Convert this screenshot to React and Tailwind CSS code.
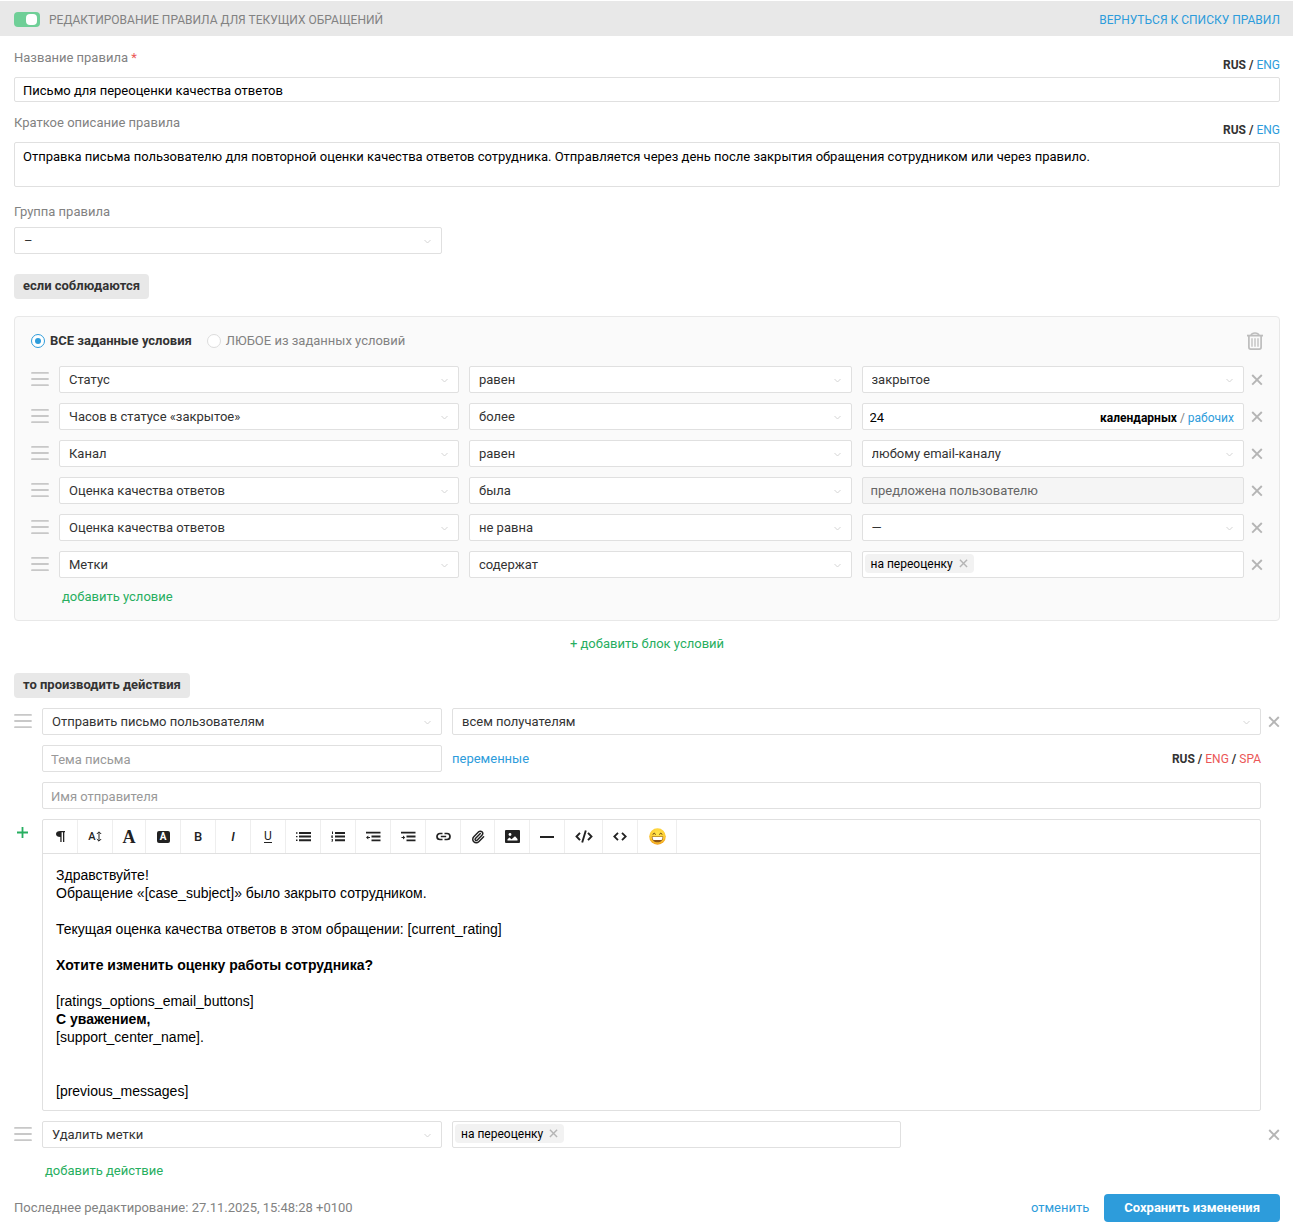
import React, { useState } from 'react';
import clsx from 'clsx';
import { Paperclip } from 'lucide-react';

const CONDITIONS = [
  { field: 'Статус', operator: 'равен', type: 'select', value: 'закрытое' },
  { field: 'Часов в статусе «закрытое»', operator: 'более', type: 'hours', value: '24' },
  { field: 'Канал', operator: 'равен', type: 'select', value: 'любому email-каналу' },
  { field: 'Оценка качества ответов', operator: 'была', type: 'readonly', value: 'предложена пользователю' },
  { field: 'Оценка качества ответов', operator: 'не равна', type: 'select', value: '—' },
  { field: 'Метки', operator: 'содержат', type: 'tags', value: 'на переоценку' },
];

const App = () => {
  const [enabled, setEnabled] = useState(true);
  const [match, setMatch] = useState('all');

  return (
    <main className="bg-white pt-px font-[Roboto,sans-serif] text-[13px] leading-4 text-[#333]">
      {/* Header */}
      <header className="flex h-[35px] items-center justify-between bg-[#e8e8e8] pt-0.5 pr-[13px] pl-3.5 text-xs">
        <div className="flex items-center gap-[9px]">
          <label className="relative flex cursor-pointer">
            <input
              type="checkbox"
              aria-label="Правило включено"
              checked={enabled}
              onChange={(e) => setEnabled(e.target.checked)}
              className="peer h-[15px] w-[26px] appearance-none rounded-sm bg-gray-300 checked:bg-[#6fcf97]"
            />
            <span className="pointer-events-none absolute top-0.5 left-0.5 h-[11px] w-[11px] rounded-sm bg-white peer-checked:left-3" />
          </label>
          <h1 className="text-[#828282]">РЕДАКТИРОВАНИЕ ПРАВИЛА ДЛЯ ТЕКУЩИХ ОБРАЩЕНИЙ</h1>
        </div>
        <a href="#rules" className="text-[#2d9cdb]">ВЕРНУТЬСЯ К СПИСКУ ПРАВИЛ</a>
      </header>

      <form className="pr-[13px] pl-3.5" onSubmit={(e) => e.preventDefault()}>
        {/* Name and description */}
        <div className="flex h-[41px] items-end justify-between pb-1">
          <label htmlFor="name" className="mb-[7px] text-[#828282]">
            Название правила <span className="text-[#eb5757]">*</span>
          </label>
          <Languages items={['ENG']} />
        </div>
        <input
          id="name"
          defaultValue="Письмо для переоценки качества ответов"
          className="block h-[25px] w-full rounded-xs border border-[#e0e0e0] px-2 pt-0.5 text-black outline-none"
        />
        <div className="flex h-10 items-end justify-between pb-1">
          <label htmlFor="description" className="mb-[7px] text-[#828282]">Краткое описание правила</label>
          <Languages items={['ENG']} />
        </div>
        <textarea
          id="description"
          defaultValue="Отправка письма пользователю для повторной оценки качества ответов сотрудника. Отправляется через день после закрытия обращения сотрудником или через правило."
          className="block h-[45px] w-full resize-none rounded-xs border border-[#e0e0e0] px-2 py-1.5 text-black outline-none"
        />

        {/* Group */}
        <label htmlFor="group" className="mt-[17px] mb-[7px] block text-[#828282]">Группа правила</label>
        <SelectBox id="group" value="–" className="w-[428px]" />

        <SectionBadge className="mt-5">если соблюдаются</SectionBadge>

        {/* Conditions */}
        <section className="mt-[17px] rounded-sm border border-[#e8e8e8] bg-[#fafafa] px-4 py-[15px]">
          <div className="mb-4 flex items-center">
            <RadioOption checked={match === 'all'} onChange={() => setMatch('all')} className="mr-[15px]">
              ВСЕ заданные условия
            </RadioOption>
            <RadioOption checked={match === 'any'} onChange={() => setMatch('any')}>
              ЛЮБОЕ из заданных условий
            </RadioOption>
            <button type="button" aria-label="Удалить блок" className="ml-auto text-[#bdbdbd]">
              <TrashIcon />
            </button>
          </div>
          <div className="flex flex-col gap-2.5">
            {CONDITIONS.map((item, i) => (
              <div key={i} className="flex items-center">
                <DragHandle />
                <div className="grid min-w-0 flex-1 grid-cols-[400px_1fr_1fr] gap-2.5">
                  <SelectBox label="Условие" value={item.field} />
                  <SelectBox label="Оператор" value={item.operator} />
                  <ConditionValue type={item.type} value={item.value} />
                </div>
                <RemoveButton />
              </div>
            ))}
          </div>
          <button type="button" className="mt-[11px] ml-[31px] block text-[#27ae60]">добавить условие</button>
        </section>

        <button type="button" className="mx-auto mt-[15px] block text-[#27ae60]">+ добавить блок условий</button>

        {/* Actions */}
        <SectionBadge className="mt-[21px]">то производить действия</SectionBadge>

        <div className="mt-2.5 flex items-center">
          <DragHandle />
          <div className="grid min-w-0 flex-1 grid-cols-[400px_1fr] gap-2.5">
            <SelectBox label="Действие" value="Отправить письмо пользователям" />
            <SelectBox label="Получатели" value="всем получателям" />
          </div>
          <RemoveButton />
        </div>
        <div className="mt-2.5 mr-[19px] ml-7 flex items-center">
          <input
            aria-label="Тема письма"
            placeholder="Тема письма"
            className="mr-2.5 h-[27px] w-[400px] rounded-xs border border-[#e0e0e0] px-2 pt-0.5 outline-none placeholder:text-[#999]"
          />
          <button type="button" className="mr-auto text-[#2d9cdb]">переменные</button>
          <Languages items={['ENG', 'SPA']} missing />
        </div>
        <div className="mt-2.5 mr-[19px] ml-7">
          <input
            aria-label="Имя отправителя"
            placeholder="Имя отправителя"
            className="block h-[27px] w-full rounded-xs border border-[#e0e0e0] px-2 pt-0.5 outline-none placeholder:text-[#999]"
          />
        </div>

        {/* Message editor */}
        <div className="mt-2.5 mr-[19px] flex items-start">
          <button type="button" aria-label="Добавить" className="mt-2 mr-3.5 ml-[3px] text-[#27ae60]">
            <svg width="11" height="11" viewBox="0 0 11 11" stroke="currentColor" strokeWidth="1.800" fill="none">
              <path d="M5.500 0v11M0 5.500h11" />
            </svg>
          </button>
          <div className="min-w-0 flex-1 rounded-xs border border-[#e0e0e0]">
            <Toolbar />
            <div
              contentEditable
              suppressContentEditableWarning
              role="textbox"
              aria-label="Текст письма"
              className="px-[13px] pt-3 pb-2.5 font-['Liberation_Sans',sans-serif] text-sm leading-[18px] text-black outline-none"
            >
              <p>Здравствуйте!</p>
              <p>Обращение «[case_subject]» было закрыто сотрудником.</p>
              <p><br /></p>
              <p>Текущая оценка качества ответов в этом обращении: [current_rating]</p>
              <p><br /></p>
              <p className="font-bold">Хотите изменить оценку работы сотрудника?</p>
              <p><br /></p>
              <p>[ratings_options_email_buttons]</p>
              <p className="font-bold">С уважением,</p>
              <p>[support_center_name].</p>
              <p><br /></p>
              <p><br /></p>
              <p>[previous_messages]</p>
            </div>
          </div>
        </div>

        <div className="mt-2.5 flex items-center">
          <DragHandle />
          <div className="grid min-w-0 flex-1 grid-cols-[400px_449px] gap-2.5">
            <SelectBox label="Действие" value="Удалить метки" />
            <TagBox value="на переоценку" />
          </div>
          <RemoveButton />
        </div>
        <button type="button" className="mt-[15px] ml-[31px] block text-[#27ae60]">добавить действие</button>

        {/* Footer */}
        <footer className="mt-[15px] flex items-center">
          <p className="mr-auto text-[#828282]">Последнее редактирование: 27.11.2025, 15:48:28 +0100</p>
          <button type="button" className="mr-[15px] text-[#2d9cdb]">отменить</button>
          <button type="submit" className="h-7 rounded-sm bg-[#2d9cdb] px-5 font-bold text-white">
            Сохранить изменения
          </button>
        </footer>
      </form>
    </main>
  );
};

const Languages = ({ items, missing }) => (
  <div className="text-xs leading-4 font-bold">
    RUS
    {items.map((lang) => (
      <React.Fragment key={lang}>
        {' / '}
        <button type="button" className={clsx('font-normal', missing ? 'text-[#eb5757]' : 'text-[#2d9cdb]')}>
          {lang}
        </button>
      </React.Fragment>
    ))}
  </div>
);

const SectionBadge = ({ children, className }) => (
  <h2 className={clsx('flex h-[25px] w-fit items-center rounded-sm bg-[#e8e8e8] px-[9px] pb-0.5 font-bold', className)}>
    {children}
  </h2>
);

const SelectBox = ({ id, label, value, className }) => (
  <div className={clsx('relative', className)}>
    <select
      id={id}
      aria-label={label}
      className="block h-[27px] w-full appearance-none rounded-xs border border-[#e0e0e0] bg-white px-[9px] text-[#333] outline-none"
    >
      <option>{value}</option>
    </select>
    <svg className="pointer-events-none absolute top-3 right-[11px]" width="7" height="5" viewBox="0 0 7 5" fill="none" stroke="#d4d4d4">
      <path d="M.5 1 3.500 4 6.500 1" />
    </svg>
  </div>
);

const TagBox = ({ value }) => (
  <div className="flex h-[27px] rounded-xs border border-[#e0e0e0] bg-white p-0.5">
    <span className="flex h-[19px] items-center gap-1.5 rounded-sm bg-[#f2f2f2] px-1.5 text-xs text-black">
      {value}
      <button type="button" aria-label="Удалить метку">
        <CrossIcon size={9} />
      </button>
    </span>
    <input aria-label="Метки" className="min-w-0 flex-1 outline-none" />
  </div>
);

const ConditionValue = ({ type, value }) => {
  if (type === 'hours') {
    return (
      <div className="flex h-[27px] items-center rounded-xs border border-[#e0e0e0] bg-white pt-0.5 pr-[9px] pl-[7px]">
        <input aria-label="Количество часов" defaultValue={value} className="min-w-0 flex-1 text-black outline-none" />
        <div className="text-xs leading-4 text-[#828282]">
          <b className="text-black">календарных</b>
          {' / '}
          <button type="button" className="text-[#2d9cdb]">рабочих</button>
        </div>
      </div>
    );
  }
  if (type === 'readonly') {
    return (
      <input
        readOnly
        aria-label="Значение"
        value={value}
        className="block h-[27px] w-full rounded-xs border border-[#e0e0e0] bg-[#f5f5f5] px-2 text-[#666] outline-none"
      />
    );
  }
  if (type === 'tags') {
    return <TagBox value={value} />;
  }
  return <SelectBox label="Значение" value={value} />;
};

const RadioOption = ({ checked, onChange, className, children }) => (
  <label className={clsx('flex cursor-pointer items-center gap-[5px]', checked ? 'font-bold' : 'text-[#828282]', className)}>
    <span className="relative flex">
      <input
        type="radio"
        name="match"
        checked={checked}
        onChange={onChange}
        className="peer h-3.5 w-3.5 appearance-none rounded-full border border-[#dcdcdc] bg-white checked:border-[#2d9cdb]"
      />
      <span className="pointer-events-none absolute inset-1 hidden rounded-full bg-[#2d9cdb] peer-checked:block" />
    </span>
    {children}
  </label>
);

const DragHandle = () => (
  <button type="button" aria-label="Переместить" className="mr-2.5 cursor-move text-[#c8c8c8]">
    <svg width="18" height="15" viewBox="0 0 18 15" stroke="currentColor" strokeWidth="1.800" strokeLinecap="round">
      <path d="M1 .9h16M1 7h16M1 13.200h16" />
    </svg>
  </button>
);

const RemoveButton = () => (
  <button type="button" aria-label="Удалить" className="ml-[7px]">
    <CrossIcon size={12} />
  </button>
);

const CrossIcon = ({ size }) => (
  <svg width={size} height={size} viewBox="0 0 12 12" stroke="#b5b5b5" strokeWidth="1.900" fill="none">
    <path d="M1.200 1l9.600 9.600M10.800 1 1.200 10.600" />
  </svg>
);

const TrashIcon = () => (
  <svg width="16" height="18" viewBox="0 0 16 18" fill="none" stroke="currentColor">
    <path d="M0 3.600h16" strokeWidth="1.800" />
    <path d="M4 3.200C4.600 1.400 5.600 .9 8 .9s3.400 .5 4 2.300" strokeWidth="1.500" />
    <path d="M1.900 4v11.200c0 1.300 .6 1.900 1.800 1.900h8.600c1.200 0 1.800-.6 1.800-1.900V4" strokeWidth="1.700" />
    <path d="M5 6.300v8.400M8 6.300v8.400M11 6.300v8.400" strokeWidth="1.300" />
  </svg>
);

const BulletListIcon = () => (
  <svg width="15" height="11" viewBox="0 0 15 11" fill="currentColor">
    <path d="M3 1h12v2H3zM3 4.600h12v2H3zM3 8.200h12v2H3zM0 1.300h1.500v1.400H0zM0 4.900h1.500v1.400H0zM0 8.500h1.500v1.400H0z" />
  </svg>
);

const NumberListIcon = () => (
  <svg width="15" height="11" viewBox="0 0 15 11" fill="currentColor">
    <path d="M4 1h10v2H4zM4 4.600h10v2H4zM4 8.200h10v2H4zM1 .5h1v2.600H1zM.3 4.400h1.700v.8L1.300 6.100H2v.6H.3zM.3 8h1.700v2.600H.3V10h1v-.4H.6V9h.7v-.4h-1z" />
  </svg>
);

const IndentIcon = ({ outdent }) => (
  <svg width="15" height="11" viewBox="0 0 15 11" fill="currentColor">
    <path d="M0 .8h14.500v1.800H0zM5.500 4.600h9v1.800h-9zM5.500 8.400h9v1.800h-9z" />
    <path d={outdent ? 'M0 6.500 2.300 4.600v1.300H4v1.200H2.300v1.300z' : 'M4.200 6.500 2 4.600v1.300H.5v1.200H2v1.300z'} />
  </svg>
);

const LinkIcon = () => (
  <svg width="15" height="9" viewBox="0 0 15 9" fill="none" stroke="currentColor" strokeWidth="1.700">
    <path d="M6.500 1.500H4a3 3 0 0 0 0 6h2.500M8.500 1.500H11a3 3 0 0 1 0 6H8.500M4.800 4.500h5.400" />
  </svg>
);

const ImageIcon = () => (
  <svg width="15" height="13" viewBox="0 0 15 13">
    <rect width="15" height="13" rx="1" fill="#222" />
    <circle cx="5" cy="4.500" r="1.400" fill="#fff" />
    <path d="M2.500 10.500V9.200L4.500 7.600l2 1.600L10 6.300l2.500 2.600v1.600z" fill="#fff" />
  </svg>
);

const SmileIcon = () => (
  <svg width="17" height="17" viewBox="0 0 17 17">
    <defs>
      <radialGradient id="face" cx="50%" cy="35%" r="65%">
        <stop offset="0" stopColor="#ffe84f" />
        <stop offset=".7" stopColor="#fdcb32" />
        <stop offset="1" stopColor="#ee9b1d" />
      </radialGradient>
    </defs>
    <circle cx="8.500" cy="8.500" r="8.300" fill="url(#face)" />
    <path d="M4 6.300c.3-1.600 2-1.600 2.400 0M10.600 6.300c.4-1.600 2.100-1.600 2.400 0" fill="none" stroke="#6b4515" strokeWidth="1" strokeLinecap="round" />
    <path d="M2.800 8.500h11.400c0 3.700-2.300 5.800-5.700 5.800S2.800 12.200 2.800 8.500z" fill="#8a5418" />
    <path d="M3.500 8.900h10c0 1.600-.4 2.600-1.200 3.100H4.700c-.8-.5-1.200-1.500-1.200-3.100z" fill="#fff" />
  </svg>
);

const TOOLS = [
  {
    title: 'Формат',
    width: 'w-[35px]',
    icon: (
      <svg width="9" height="11" viewBox="0 0 9 11" fill="currentColor">
        <path d="M9 0v1.200H8.300V11H7V1.200H5.600V11H4.300V6C1.700 6 0 5 0 3S1.700 0 4.300 0z" />
      </svg>
    ),
  },
  {
    title: 'Размер шрифта',
    width: 'w-[35px]',
    icon: (
      <span className="flex items-center text-[11px] font-medium">
        A
        <svg width="6" height="11" viewBox="0 0 6 11" fill="none" stroke="currentColor">
          <path d="M3 1v9M.8 3 3 .8 5.200 3M.8 8 3 10.200 5.200 8" />
        </svg>
      </span>
    ),
  },
  { title: 'Цвет текста', width: 'w-[33px]', icon: <span className="font-['Liberation_Serif',serif] text-lg font-bold">A</span> },
  {
    title: 'Цвет фона',
    width: 'w-[35px]',
    icon: <span className="flex h-3 w-[13px] items-center justify-center rounded-xs bg-[#222] text-[10px] font-bold text-white">A</span>,
  },
  { title: 'Полужирный', width: 'w-[35px]', icon: <span className="font-medium">B</span> },
  { title: 'Курсив', width: 'w-[35px]', icon: <span className="font-medium italic">I</span> },
  { title: 'Подчёркнутый', width: 'w-[35px]', icon: <span className="border-b border-[#222] text-xs leading-3">U</span> },
  { title: 'Маркированный список', width: 'w-[35px]', icon: <BulletListIcon /> },
  { title: 'Нумерованный список', width: 'w-[35px]', icon: <NumberListIcon /> },
  { title: 'Уменьшить отступ', width: 'w-[35px]', icon: <IndentIcon outdent /> },
  { title: 'Увеличить отступ', width: 'w-[35px]', icon: <IndentIcon /> },
  { title: 'Ссылка', width: 'w-[35px]', icon: <LinkIcon /> },
  { title: 'Файл', width: 'w-[34px]', icon: <Paperclip size={14} strokeWidth={2.5} /> },
  { title: 'Изображение', width: 'w-[35px]', icon: <ImageIcon /> },
  {
    title: 'Линия',
    width: 'w-[35px]',
    icon: (
      <svg width="14" height="2" viewBox="0 0 14 2" fill="currentColor">
        <path d="M0 0h14v2H0z" />
      </svg>
    ),
  },
  {
    title: 'HTML',
    width: 'w-[38px]',
    icon: (
      <svg width="18" height="13" viewBox="0 0 18 13" fill="none" stroke="currentColor" strokeWidth="1.900">
        <path d="M5 2.800 1.500 6.500 5 10.200M13 2.800l3.500 3.700L13 10.200M10.800 .4 7.200 12.600" />
      </svg>
    ),
  },
  {
    title: 'Код',
    width: 'w-[35px]',
    icon: (
      <svg width="14" height="9" viewBox="0 0 14 9" fill="none" stroke="currentColor" strokeWidth="1.800">
        <path d="M5 .8 1.300 4.500 5 8.200M9 .8l3.700 3.700L9 8.200" />
      </svg>
    ),
  },
  { title: 'Эмодзи', width: 'w-[39px]', icon: <SmileIcon /> },
];

const Toolbar = () => (
  <div className="flex h-[34px] border-b border-[#e0e0e0] text-[#222]">
    {TOOLS.map((tool) => (
      <button
        key={tool.title}
        type="button"
        aria-label={tool.title}
        className={clsx('flex items-center justify-center border-r border-[#eee]', tool.width)}
      >
        {tool.icon}
      </button>
    ))}
  </div>
);

export default App;
